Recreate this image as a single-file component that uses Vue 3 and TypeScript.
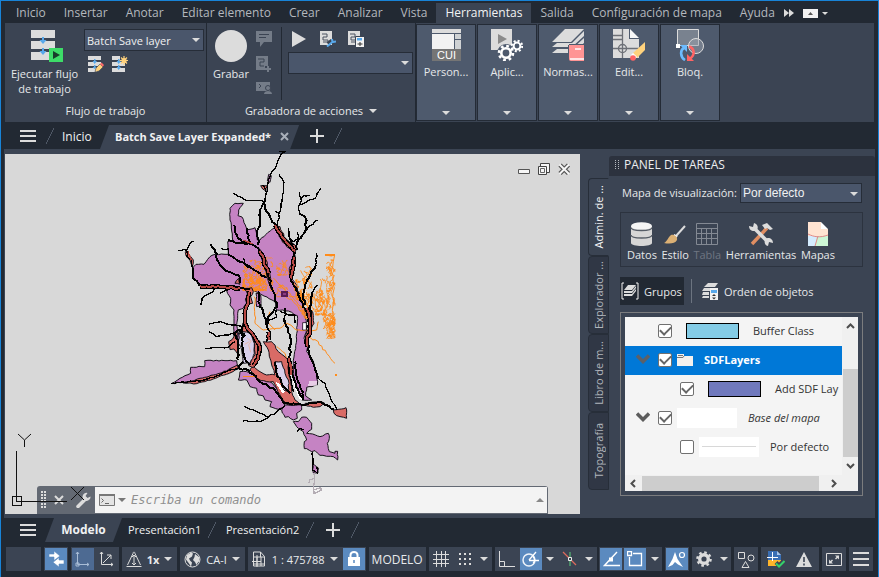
<script setup lang="ts">
import { ref } from 'vue'

type Pt = [number, number]

const menuTabs = ['Inicio', 'Insertar', 'Anotar', 'Editar elemento', 'Crear', 'Analizar', 'Vista', 'Herramientas', 'Salida', 'Configuración de mapa', 'Ayuda']
const activeMenu = ref('Herramientas')
const sideTabs = ['Admin. de ...', 'Explorador ...', 'Libro de m...', 'Topografía']
const activeSide = ref('Admin. de ...')
const workflow = ref('Batch Save layer')
const action = ref('')
const displayMap = ref('Por defecto')
const command = ref('')
const layers = ref({ buffer: true, sdf: true, add: true, base: true, def: false })

/* Deterministic noise so that the map is drawn the same way every time */
function makeNoise(seed: number) {
  let s = seed
  return () => {
    s = (s * 1103515245 + 12345) % 2147483648
    return s / 2147483648
  }
}

function parse(src: string): Pt[] {
  return src.split(' ').map((p) => p.split(',').map(Number) as Pt)
}

/* Breaks each segment into short steps pushed off the line, like a river bank */
function meander(src: string, amp: number, seed: number, close = false): string {
  const rnd = makeNoise(seed * 7919 + 17)
  const pts = parse(src)
  if (close) pts.push(pts[0])
  const out: string[] = [`M${pts[0][0]},${pts[0][1]}`]
  for (let i = 1; i < pts.length; i++) {
    const [x0, y0] = pts[i - 1]
    const [x1, y1] = pts[i]
    const n = Math.max(1, Math.round(Math.hypot(x1 - x0, y1 - y0) / 9))
    for (let k = 1; k <= n; k++) {
      const t = k / n
      const a = k === n ? 0 : amp
      out.push(`L${Math.round(x0 + (x1 - x0) * t + (rnd() - 0.5) * 2 * a)},${Math.round(y0 + (y1 - y0) * t + (rnd() - 0.5) * 2 * a)}`)
    }
  }
  return out.join(' ') + (close ? 'Z' : '')
}

/* Random-walk contour fragments inside a box */
function contours(x: number, y: number, w: number, h: number, count: number, seed: number, lean = 0): string {
  const rnd = makeNoise(seed * 4001 + 3)
  let d = ''
  for (let i = 0; i < count; i++) {
    let px = x + rnd() * w
    let py = y + rnd() * h
    d += `M${Math.round(px)},${Math.round(py)}`
    const steps = 4 + Math.floor(rnd() * 7)
    for (let k = 0; k < steps; k++) {
      px = Math.min(x + w, Math.max(x, px + (rnd() - 0.5) * 13 + lean))
      py = Math.min(y + h, Math.max(y, py + (rnd() - 0.35) * 14))
      d += `L${Math.round(px)},${Math.round(py)}`
    }
  }
  return d
}

const purple = [
  '210,190 225,175 250,175 236,195 234,212 246,216 256,240 262,254 285,248 292,285 300,285 318,268 345,248 360,265 375,290 405,320 405,345 395,400 410,420 420,460 435,500 440,555 432,580 445,600 440,620 460,650 470,690 472,720 440,727 437,753 455,765 425,765 405,715 400,675 400,655 410,585 412,512 385,498 350,495 345,470 270,430 118,420 98,395 98,370 108,358 132,358 150,335 165,328 205,328 203,290 218,285 214,240 210,225',
  '195,430 275,432 262,465 250,490 235,495 230,540 240,585 222,575 222,495 210,480 212,460',
  '288,445 302,450 304,485 290,485',
  '36,715 60,700 92,685 92,667 134,665 134,647 230,647 235,670 200,680 150,695 100,710 60,713',
  '240,680 260,680 300,695 330,710 350,730 370,765 375,785 355,793 330,785 335,770 315,765 310,753 295,750 290,730 270,725 260,705 235,705',
  '365,795 375,780 425,780 425,795 410,805 412,820 400,825 385,815 375,817',
  '410,845 400,830 415,830 425,817 440,817 455,835 455,853 440,865 458,867 480,875 505,865 508,880 502,895 508,920 525,925 525,919 533,919 533,945 520,935 480,931 465,917 455,920 440,911 433,911 433,890 440,885 430,860',
  '458,955 476,970 474,984 460,984',
  '326,88 334,92 330,112 322,108',
]

const red = [
  '310,590 335,590 345,600 355,620 385,645 385,675 395,735 405,765 425,780 380,778 365,760 350,730 340,710 320,710 290,700 270,675 280,665 300,680 320,690 345,690 335,660 330,640 325,615',
  '248,535 262,545 285,575 302,595 298,640 280,668 266,662 285,630 284,595 262,565 246,560',
  '206,590 222,575 232,560 236,600 232,625 222,612 210,614',
  '70,714 120,700 160,690 200,678 232,660 235,672 200,688 160,702 110,716',
  '435,775 480,770 492,773 480,785 460,787 440,783',
  '520,795 545,792 558,788 560,820 540,815 522,805',
  '252,432 275,428 280,440 272,455 278,475 262,480 256,462 262,445',
  '388,370 402,345 402,385 392,402',
  '345,240 360,245 372,275 405,300 412,310 405,322 380,305 358,275',
  '225,415 236,400 240,418',
  '78,318 88,330 100,345 97,365 90,345 78,332',
  '440,495 458,500 462,535 450,560 440,590 436,580 448,545',
  '296,310 318,345 330,390 332,430 322,400 308,350',
  '302,122 322,122 318,138 308,132',
]

const lavender = [
  '240,560 270,565 283,595 283,625 270,655 250,655 245,615 235,595',
  '345,650 365,650 375,685 385,705 385,740 370,735 365,710 350,685',
]

/* Rivers broad enough to show water between both banks */
const wideRivers = [
  '268,440 265,470 256,495 255,525 262,550 285,578 299,608 295,640 280,662',
  '402,335 399,370 392,400',
  '440,490 451,520 450,560 440,585 443,605',
  '345,240 365,275 385,298 405,318',
  '388,640 394,690',
  '325,560 328,585',
  '120,424 240,430',
  '300,318 326,385',
]

const thickRivers = [
  '315,165 315,190 330,215 350,245 365,275 385,300 405,320',
  '405,320 400,370 392,400 408,430 420,460 440,500 450,535 450,560 440,585 445,615 460,655 475,700',
  '222,240 230,270 245,290 275,298 295,310 310,340 325,380 330,420 345,450 352,485 325,515 320,540',
  '205,285 235,295 275,298',
  '205,330 230,345 260,360 300,385 320,400',
  '152,298 165,320 175,350 195,375 235,390 240,415',
  '98,370 98,395 118,420 180,422 240,428 270,432',
  '250,650 235,670',
  '298,440 295,470 310,500 320,540 330,560 325,580 318,590',
  '300,195 300,230 290,270 295,300',
  '467,360 450,390 435,420 430,450 436,480',
  '233,645 235,595 222,565 240,555 255,575',
  '370,520 380,545 390,575 390,655 400,695 415,735 430,765',
  '235,670 265,675 300,710 345,735 375,775 425,780 480,770 522,793',
  '250,540 245,600 255,640 270,660',
  '345,650 350,685 370,725 390,745',
  '418,205 437,220 438,255 415,285 410,315',
  '262,250 265,280 275,300',
  '458,440 452,480 450,530',
  '405,650 412,700 432,755',
]

const thinRivers = [
  '375,20 362,28 350,60 333,85 325,110 318,145 314,170 300,195',
  '358,20 377,19',
  '218,145 240,155 255,165 315,170',
  '357,88 372,112 368,150 360,200 352,240',
  '345,200 358,205',
  '418,140 425,165 415,185 420,205',
  '482,130 465,160 440,170 420,180',
  '448,150 430,152 422,165',
  '472,225 455,240 440,255',
  '182,310 205,312 205,330',
  '55,316 80,315 90,295 100,288',
  '80,315 80,335 95,345 98,370',
  '168,430 150,445 130,455 122,480',
  '180,445 205,435',
  '470,325 467,360',
  '472,420 458,440',
  '148,537 180,530 215,540 245,545',
  '385,250 388,280 400,300',
  '412,262 414,280 400,290 390,280',
  '360,500 385,510 405,510 405,535',
  '375,490 372,530',
  '250,340 255,360 275,370',
  '348,495 350,515 325,525 318,540',
  '148,560 170,575 205,570 230,563',
  '134,611 165,607 205,607 225,590',
  '475,700 495,715 510,755 525,780 530,795',
  '32,715 60,712 100,710 160,698 200,680 235,670',
  '253,785 290,800 325,817',
  '250,828 300,830 325,817 365,790 375,780',
  '308,120 315,130 320,150',
  '385,650 388,690 400,740',
  '410,860 420,850 430,855',
  '458,920 458,975 472,985 470,965',
]

const purplePaths = purple.map((s, i) => meander(s, 1.5, i + 3, true))
const redPaths = red.map((s, i) => meander(s, 2, i + 40, true))
const lavenderPaths = lavender.map((s, i) => meander(s, 2, i + 60, true))
const widePaths = wideRivers.map((s, i) => meander(s, 2.5, i + 300))
const thickPaths = thickRivers.map((s, i) => meander(s, 3, i + 80))
const thinPaths = thinRivers.map((s, i) => meander(s, 2.2, i + 120))
const contourPaths = [
  contours(248, 335, 70, 100, 38, 1, 1),
  contours(250, 375, 90, 62, 40, 2, 1),
  contours(320, 335, 65, 55, 12, 3),
  contours(345, 410, 60, 45, 6, 14, 2),
  contours(408, 365, 48, 100, 30, 4),
  contours(466, 400, 30, 110, 22, 5),
  contours(500, 345, 25, 235, 44, 6),
  contours(440, 440, 50, 60, 16, 7),
  contours(490, 505, 35, 70, 18, 8),
  contours(412, 440, 36, 80, 14, 9, 2),
]
const contourLines = [
  '495,330 524,330 515,375 520,420 518,540',
  '340,400 360,420 380,440 410,470 430,500 445,520',
  '350,430 375,450 400,470 425,500',
  '283,455 285,535 310,555 360,550 380,535 410,555 470,555 475,530',
  '330,500 322,530 345,555',
  '350,605 375,625 385,645',
  '445,575 475,590 500,625 525,655',
  '410,440 430,470 450,490',
].map((s, i) => meander(s, 3, i + 200))
</script>

<template>
  <div class="app">
    <nav class="menu" aria-label="Cinta">
      <button v-for="t in menuTabs" :key="t" type="button" class="menu-tab" :class="{ on: t === activeMenu }" @click="activeMenu = t">{{ t }}</button>
      <button type="button" class="more" aria-label="Más fichas"><svg width="10" height="8" viewBox="0 0 10 8"><path d="M0 0l5 4-5 4zM5 0l5 4-5 4z" fill="#dcdcdc" /></svg></button>
      <button type="button" class="mini" aria-label="Minimizar cinta"><svg width="15" height="9" viewBox="0 0 15 9"><path d="M0 0h15v9H0z" fill="#f2f2f2" /><path d="M5 6l2.500-3 2.500 3z" fill="#555" /></svg></button>
      <button type="button" class="mini-arrow" aria-label="Opciones de cinta"><span class="tri small" /></button>
    </nav>

    <header class="ribbon">
      <section class="group flow">
        <div class="group-body">
          <button type="button" class="big run">
            <svg width="34" height="34" viewBox="0 0 34 34">
              <path d="M1 1h24v8H1zM1 12h24v8H1zM1 23h24v8H1z" fill="#dcdcdc" />
              <path d="M12 8h2v3h2.500L13 15l-3.500-4H12zM12 19h2v3h2.500L13 26l-3.500-4H12z" fill="#58a8ea" />
              <path d="M19 19h14v14H19z" fill="#3ddc68" /><path d="M23 22l7 4-7 4z" fill="#173d2a" />
            </svg>
            <span>Ejecutar flujo<br />de trabajo</span>
          </button>
          <div class="stack">
            <label class="select wf">
              <select v-model="workflow" aria-label="Flujo de trabajo"><option>Batch Save layer</option></select>
              <span class="tri" />
            </label>
            <div class="icons">
              <button type="button" class="ico" aria-label="Editar flujo de trabajo">
                <svg width="16" height="16" viewBox="0 0 16 16"><path d="M0 0h13v4H0zM0 6h13v4H0zM0 12h9v4H0z" fill="#dcdcdc" /><path d="M6 3h1.500v2h1.500L6.700 8 4.500 5H6zM6 9h1.500v2h1l-2 2-2-2H6z" fill="#58a8ea" /><path d="M7 16l1-4 4-4 3 3-4 4z" fill="#ffd27d" stroke="#3b4453" stroke-width=".6" /><path d="M12 8l1.500-1.500L16 9l-1.300 1.800z" fill="#ff6b6b" /></svg>
              </button>
              <button type="button" class="ico" aria-label="Nuevo flujo de trabajo">
                <svg width="16" height="16" viewBox="0 0 16 16"><path d="M0 0h8v4H0zM0 6h13v4H0zM0 12h13v4H0z" fill="#dcdcdc" /><path d="M6 3h1.500v2h1.500L6.700 8 4.500 5H6zM6 9h1.500v2h1.500l-2.300 3-2.200-3H6z" fill="#58a8ea" /><path d="M12 0v9M7.500 4.500h9M9 1.500l6 6M15 1.500l-6 6" stroke="#ffd27d" stroke-width="1.200" /><circle cx="12" cy="4.500" r="2.600" fill="#ffd27d" /></svg>
              </button>
            </div>
          </div>
        </div>
        <p class="caption">Flujo de trabajo</p>
      </section>

      <section class="group rec">
        <div class="group-body">
          <button type="button" class="big record">
            <svg width="34" height="34" viewBox="0 0 34 34"><circle cx="17" cy="17" r="16" fill="#dcdcdc" /></svg>
            <span>Grabar</span>
          </button>
          <div class="col">
            <svg width="16" height="16" viewBox="0 0 16 16"><path d="M0 0h16v11H8l-4 5v-5H0z" fill="#747c88" /><path d="M3 3.500h10M3 6.500h7" stroke="#3b4453" /></svg>
            <svg width="16" height="16" viewBox="0 0 16 16"><path d="M0 0h12v10h-3v4H0z" fill="#747c88" /><path d="M2 3h6v3H4v4h4" stroke="#3b4453" fill="none" /><path d="M12 10v6M9 13h6" stroke="#747c88" stroke-width="2" /></svg>
            <svg width="16" height="13" viewBox="0 0 16 13"><path d="M0 1h14v9H0z" fill="#747c88" /><path d="M3 3l2 2-2 2" stroke="#3b4453" fill="none" /><circle cx="12" cy="7" r="2.500" fill="#747c88" stroke="#3b4453" /><path d="M8 13c0-4 8-4 8 0z" fill="#747c88" /></svg>
          </div>
          <i class="rule" />
          <div class="stack actions">
            <div class="icons wide">
              <button type="button" class="ico" aria-label="Reproducir"><svg width="16" height="16" viewBox="0 0 16 16"><path d="M0 0l14 8-14 8z" fill="#dcdcdc" /></svg></button>
              <button type="button" class="ico" aria-label="Preferencias"><svg width="16" height="16" viewBox="0 0 16 16"><path d="M0 0h12v14H0z" fill="#dcdcdc" /><path d="M2 3h5v3H3v3h5v2H3" stroke="#4a5260" fill="none" /><path d="M8 13l4-3.500" stroke="#3b4453" stroke-width="4" /><path d="M7 15.500l6-5M12 8l.5 3 3.500-.5" stroke="#58a8ea" stroke-width="2" fill="none" /></svg></button>
              <button type="button" class="ico" aria-label="Administrar macros"><svg width="16" height="16" viewBox="0 0 16 16"><path d="M0 0h12v14H0z" fill="#dcdcdc" /><path d="M2 3h5v3H3v3h5v2H3" stroke="#4a5260" fill="none" /><path d="M7.500 5.500h9v11h-9z" fill="#f2f2f2" stroke="#3b4453" /><path d="M9 7h5v2.500H9z" fill="#58a8ea" /><path d="M9.500 13h5M12 11v4" stroke="#333" /></svg></button>
            </div>
            <label class="select ac">
              <select v-model="action" aria-label="Macros disponibles"><option value=""></option></select>
              <span class="tri" />
            </label>
          </div>
        </div>
        <p class="caption">Grabadora de acciones <span class="tri" /></p>
      </section>

      <button type="button" class="fold">
        <svg width="32" height="32" viewBox="0 0 32 32"><path d="M2 0h29v4H2z" fill="#dcdcdc" /><path d="M2 5h22v15H2z" fill="#f2f2f2" /><path d="M25 5h6v5h-6zM25 11h6v9h-6z" fill="#cfd2d4" /><path d="M2 20h29v12H2z" fill="#757575" /><text x="16.500" y="30" text-anchor="middle" font-size="11" fill="#fff" font-family="Liberation Sans, sans-serif">CUI</text></svg>
        <span>Person...</span><i class="tri" />
      </button>
      <button type="button" class="fold">
        <svg width="32" height="32" viewBox="0 0 32 32"><path d="M0 0h21v21H0z" fill="#dcdcdc" /><path d="M7 5l9 5-9 5z" fill="#8a8a8a" /><circle cx="15" cy="24" r="5.500" fill="none" stroke="#4e5a6d" stroke-width="7" /><circle cx="15" cy="24" r="4.700" fill="#4e5a6d" stroke="#fff" stroke-width="2.600" /><circle cx="15" cy="24" r="7" fill="none" stroke="#fff" stroke-width="2.600" stroke-dasharray="2.750 2.750" /><circle cx="26" cy="17" r="3.400" fill="#4e5a6d" stroke="#fff" stroke-width="2" /><circle cx="26" cy="17" r="5.200" fill="none" stroke="#fff" stroke-width="2" stroke-dasharray="2.040 2.040" /></svg>
        <span>Aplic...</span><i class="tri" />
      </button>
      <button type="button" class="fold">
        <svg width="32" height="32" viewBox="0 0 32 32"><path d="M13 0h19L19 13H0zM5 14h15L32 2v5L20 18H0zM5 20h15L32 9v5L20 24H0z" fill="#dcdcdc" /><path d="M17 16h15v16H19q-2 0-2-2z" fill="#ff9494" /><path d="M16.500 16v16M17 15.500h15" stroke="#4e5a6d" /><path d="M23 20h6" stroke="#fff" stroke-width="1.500" /><path d="M18 30h14" stroke="#fff" stroke-width="1.500" /></svg>
        <span>Normas...</span><i class="tri" />
      </button>
      <button type="button" class="fold">
        <svg width="32" height="32" viewBox="0 0 32 32"><path d="M0 0h16v10h10v19H0z" fill="#dcdcdc" /><path d="M17 0l9 9h-9z" fill="#f7f7f7" /><path d="M9.500 0v29M0 6.500h9M0 10.500h9M0 19.500h26" stroke="#6d7077" fill="none" stroke-width="1.300" /><circle cx="9.500" cy="19.500" r="4" fill="none" stroke="#6d7077" stroke-width="1.300" /><path d="M20 24L32 13v8l-8 8z" fill="#ffd27d" /><path d="M19 25l4 4" stroke="#fff" stroke-width="3" /><circle cx="20" cy="29" r="2.800" fill="#ff6464" /></svg>
        <span>Edit...</span><i class="tri" />
      </button>
      <button type="button" class="fold">
        <svg width="32" height="32" viewBox="0 0 32 32"><path d="M3.500.500h21v16h-21z" fill="#79828f" stroke="#dcdcdc" /><circle cx="22" cy="17" r="7.500" fill="#99a0ab" fill-opacity=".5" stroke="#dcdcdc" /><path d="M2 15h4v4H2z" fill="#fff" /><path d="M11 31C6 28 6 21 10 19" stroke="#6cbcff" stroke-width="2.600" fill="none" /><path d="M6 16h7v7z" fill="#6cbcff" /><path d="M15 17.500c6 2 6 9 1 12" stroke="#ff6464" stroke-width="2.600" fill="none" /><path d="M20 32h-7v-7z" fill="#ff6464" /></svg>
        <span>Bloq.</span><i class="tri" />
      </button>
    </header>

    <div class="file-tabs">
      <button type="button" class="burger" aria-label="Menú de dibujos"><i /><i /><i /></button>
      <i class="slash" />
      <button type="button" class="plain start">Inicio</button>
      <div class="doc">
        <span>Batch Save Layer Expanded*</span>
        <button type="button" class="ico" aria-label="Cerrar dibujo"><svg width="9" height="9" viewBox="0 0 9 9"><path d="M1 1l7 7M8 1L1 8" stroke="#a9b0ba" stroke-width="2" /></svg></button>
      </div>
      <button type="button" class="ico plus" aria-label="Nuevo dibujo"><svg width="14" height="14" viewBox="0 0 14 14"><path d="M7 0v14M0 7h14" stroke="#dcdcdc" stroke-width="2" /></svg></button>
      <i class="slash" />
    </div>

    <main class="work">
      <div class="canvas">
        <svg class="map" width="575" height="360" viewBox="5 154 575 360" shape-rendering="crispEdges">
          <g transform="translate(160 145) scale(.3333)" fill="none" stroke-linejoin="round">
            <path v-for="(d, i) in purplePaths" :key="'p' + i" :d="d" fill="#c583c3" stroke="#16121a" stroke-width="3" />
            <path v-for="(d, i) in contourPaths" :key="'c' + i" :d="d" stroke="#ff8c1a" stroke-width="2.500" />
            <path v-for="(d, i) in contourLines" :key="'l' + i" :d="d" stroke="#ff8c1a" stroke-width="3" />
            <path d="M495 330h29M250 695h98" stroke="#ff8c1a" stroke-width="5" />
            <path d="M525 687h7v6h-7z" fill="#ff8c1a" />
            <path v-for="(d, i) in redPaths" :key="'r' + i" :d="d" fill="#d96b66" stroke="#16121a" stroke-width="3" />
            <path v-for="(d, i) in lavenderPaths" :key="'v' + i" :d="d" fill="#d8cfea" stroke="#16121a" stroke-width="3" />
            <path d="M262 580l12 8-8 12 6 22M268 590l-14 8" stroke="#e9b9ad" stroke-width="3" />
            <path d="M345 710l12 5 18 25-8 5zM398 695l22 50 12 20-14-2-16-40z" fill="#fff" />
            <path d="M362 437h22v20h-22z" fill="#571b52" /><path d="M369 443h8v8h-8z" fill="#8c3b80" />
            <path d="M428 533h11v22h-11z" fill="#fff" stroke="#000" stroke-width="2" />
            <path d="M444 722h28v-14h-24zM432 430l8 10-4 14z" fill="#fff" fill-opacity=".6" />
            <path v-for="(d, i) in thinPaths" :key="'n' + i" :d="d" stroke="#000" stroke-width="4" />
            <path v-for="(d, i) in thickPaths" :key="'t' + i" :d="d" stroke="#000" stroke-width="6" />
            <path v-for="(d, i) in widePaths" :key="'wb' + i" :d="d" stroke="#000" stroke-width="13" />
            <path v-for="(d, i) in widePaths" :key="'wr' + i" :d="d" stroke="#b84a45" stroke-width="6" />
            <path d="M84 320l10 25M250 285l28 12M392 655l4 20" stroke="#b8453f" stroke-width="4" />
            <path d="M462 985l2 20-3 20 1 22 22-12-2-8-18 8M446 1015l4-10 12-5" stroke="#b4adb4" stroke-width="4" />
          </g>
          <g fill="none" stroke="#111">
            <path d="M16.500 451v50M16 501.500h51M12.500 496.500h9v9h-9z" />
            <path d="M71 487l13 13M84 487l-13 13" shape-rendering="auto" />
            <path d="M18 434l6.500 6 6.500-6M24.500 440v7" shape-rendering="auto" />
          </g>
        </svg>
        <div class="win">
          <button type="button" class="ico" aria-label="Minimizar"><svg width="13" height="13" viewBox="0 0 13 13"><path d="M.5 6.500h11v4H.5z" fill="#f6f6f6" stroke="#555" /></svg></button>
          <button type="button" class="ico" aria-label="Restaurar"><svg width="13" height="13" viewBox="0 0 13 13"><path d="M2.500.500h9v9h-9z" fill="#f6f6f6" stroke="#444" /><path d="M.5 3.500h8v8h-8z" fill="#f6f6f6" stroke="#444" /><path d="M2.500 5.500h4v4h-4z" fill="none" stroke="#666" /></svg></button>
          <button type="button" class="ico" aria-label="Cerrar"><svg width="13" height="13" viewBox="0 0 13 13"><path d="M2 2l8.500 8.500M10.500 2L2 10.500" stroke="#555" stroke-width="4.500" /><path d="M1.500 1.500l9.500 9.500M11 1.500L1.500 11" stroke="#f6f6f6" stroke-width="2" /></svg></button>
        </div>
        <div class="cmd">
          <div class="cmd-tools">
            <svg width="5" height="18" viewBox="0 0 5 18"><path d="M1 0v18M4 0v18" stroke="#dcdcdc" stroke-width="2" stroke-dasharray="2 1" /></svg>
            <button type="button" class="ico" aria-label="Cerrar línea de comando"><svg width="10" height="10" viewBox="0 0 10 10"><path d="M1 1l8 8M9 1L1 9" stroke="#dcdcdc" stroke-width="2" /></svg></button>
            <button type="button" class="ico" aria-label="Personalizar"><svg width="16" height="16" viewBox="0 0 16 16"><path d="M2 14.500l7-7" stroke="#dcdcdc" stroke-width="3.500" stroke-linecap="round" /><path d="M14.500 4.500a4 4 0 1 1-3-3.500l-2 3 2 2z" fill="#dcdcdc" /></svg></button>
          </div>
          <div class="cmd-field">
            <svg width="16" height="12" viewBox="0 0 16 12"><path d="M.5.500h15v11H.5z" fill="#e4e4e4" stroke="#777" /><path d="M0 1h16" stroke="#777" stroke-width="2" /><path d="M2.500 4.500l2 2-2 2M6 9.500h4" stroke="#666" fill="none" /></svg>
            <span class="tri grey" />
            <input v-model="command" type="text" placeholder="Escriba un comando" aria-label="Línea de comando" />
            <span class="tri up" />
          </div>
        </div>
      </div>

      <div class="side-tabs">
        <button v-for="t in sideTabs" :key="t" type="button" class="side-tab" :class="{ on: t === activeSide }" @click="activeSide = t"><span>{{ t }}</span></button>
      </div>

      <aside class="panel">
        <h2><svg width="4" height="9" viewBox="0 0 4 9"><path d="M.5 0v9M3.500 0v9" stroke="#b5b9c0" stroke-dasharray="1 1" /></svg>PANEL DE TAREAS</h2>
        <div class="panel-body">
          <div class="row-map">
            <label for="display-map">Mapa de visualización:</label>
            <span class="select dm"><select id="display-map" v-model="displayMap"><option>Por defecto</option></select><span class="tri" /></span>
          </div>
          <div class="tools">
            <button type="button">
              <svg width="24" height="26" viewBox="0 0 24 26"><path d="M1 5v17c0 4 21 4 21 0V5z" fill="#d6d6d6" /><ellipse cx="11.500" cy="5" rx="10.500" ry="3.800" fill="#f5f5f5" /><path d="M1 6.500c0 4 21 4 21 0M1 14c0 4 21 4 21 0" fill="none" stroke="#555c66" stroke-width="1.300" /></svg>
              Datos
            </button>
            <button type="button">
              <svg width="24" height="26" viewBox="0 0 24 26"><path d="M22 5L13 15" stroke="#dcdcdc" stroke-width="2" /><path d="M13 14l-2 3" stroke="#f2f2f2" stroke-width="4" /><path d="M8 14c3-1 7 2 6 5-2 4-8 4-13 3 3-1 4-6 7-8z" fill="#dbb074" /></svg>
              Estilo
            </button>
            <button type="button" disabled>
              <svg width="24" height="26" viewBox="0 0 24 26"><path d="M1.500 2.500h21v21h-21zM1 7.500h22M1 12.500h22M1 17.500h22M6.500 7v16M11.500 7v16M16.500 7v16" fill="none" stroke="#838993" /></svg>
              Tabla
            </button>
            <button type="button">
              <svg width="26" height="26" viewBox="0 0 26 26"><path d="M4 23L19 7" stroke="#e08e62" stroke-width="3.500" /><path d="M14 4l5-2 6 6-3 1-3-2-2 1z" fill="#dcdcdc" /><path d="M6 7l14 14" stroke="#dcdcdc" stroke-width="3.500" /><path d="M1 5l4 1 1-4c5 1 5 8 0 8-3 0-5-2-5-5zM25 22l-4-1-1 4c-5-1-4-8 0-8 3 0 5 2 5 5z" fill="#dcdcdc" /></svg>
              Herramientas
            </button>
            <button type="button">
              <svg width="24" height="26" viewBox="0 0 24 26"><path d="M2 1h13v7h7v17H2z" fill="#ffe4d2" /><path d="M15 1l7 7h-7z" fill="#fff" /><path d="M2 15h9v10H2z" fill="#d4ecff" /><path d="M11 15h11v10H9z" fill="#cdf7d6" /><path d="M2 13c6 3 12 4 20 1M12 15l-3 10" fill="none" stroke="#e08a8a" /></svg>
              Mapas
            </button>
          </div>
          <div class="views">
            <button type="button" class="on">
              <svg width="18" height="18" viewBox="0 0 18 18"><path d="M3 1H1v16h2M15 1h2v16h-2" fill="none" stroke="#f2f2f2" /><path d="M7 3h8l-4 5H3zM3 9h8l4-5v2l-4 5H3zM3 12h8l4-5v2l-4 5H3z" fill="#dcdcdc" /></svg>
              Grupos
            </button>
            <i />
            <button type="button">
              <svg width="18" height="18" viewBox="0 0 18 18"><path d="M7 1h10l-3 4H3zM3 6h6v3H1zM2 10h6v3H1zM2 14h6v2H1z" fill="#dcdcdc" /><path d="M9 6h8v12H9z" fill="#f2f2f2" /><path d="M10 8h6v3h-6z" fill="#58a8ea" /><path d="M13 12l2 2h-4zM13 17.500l2-2h-4z" fill="#333" /></svg>
              Orden de objetos
            </button>
          </div>
          <div class="tree-frame">
            <div class="tree">
              <div class="tree-rows">
                <label class="node"><input v-model="layers.buffer" type="checkbox" /><i class="swatch cyan" />Buffer Class</label>
                <label class="node sel"><svg class="chev" width="14" height="11" viewBox="0 0 14 11"><path d="M1 1.500l6 6 6-6" fill="none" stroke="#5c6068" stroke-width="3.500" /></svg><input v-model="layers.sdf" type="checkbox" /><svg class="folder" width="16" height="14" viewBox="0 0 16 14"><path d="M0 1h7v2h9v10H0z" fill="#f4f1ee" /><path d="M0 4.500h6l1-1.500M1 2.500h5" stroke="#777" fill="none" /></svg>SDFLayers</label>
                <label class="node deep"><input v-model="layers.add" type="checkbox" /><i class="swatch violet" />Add SDF Lay</label>
                <label class="node it"><svg class="chev" width="14" height="11" viewBox="0 0 14 11"><path d="M1 1.500l6 6 6-6" fill="none" stroke="#5c5c5c" stroke-width="3.500" /></svg><input v-model="layers.base" type="checkbox" /><i class="thumb" />Base del mapa</label>
                <label class="node deep"><input v-model="layers.def" type="checkbox" /><i class="thumb line" />Por defecto</label>
              </div>
              <div class="vbar">
                <svg width="9" height="6" viewBox="0 0 9 6"><path d="M1 5l3.500-3.500L8 5" fill="none" stroke="#4d4d4d" stroke-width="2" /></svg>
                <i />
                <svg width="9" height="6" viewBox="0 0 9 6"><path d="M1 1l3.500 3.500L8 1" fill="none" stroke="#4d4d4d" stroke-width="2" /></svg>
              </div>
              <div class="hbar">
                <svg width="6" height="9" viewBox="0 0 6 9"><path d="M5 1L1.500 4.500 5 8" fill="none" stroke="#4d4d4d" stroke-width="2" /></svg>
                <i />
                <svg width="6" height="9" viewBox="0 0 6 9"><path d="M1 1l3.500 3.500L1 8" fill="none" stroke="#4d4d4d" stroke-width="2" /></svg>
              </div>
            </div>
          </div>
        </div>
      </aside>
    </main>

    <div class="layout-tabs">
      <button type="button" class="burger" aria-label="Menú de presentaciones"><i /><i /><i /></button>
      <button type="button" class="model">Modelo</button>
      <button type="button" class="plain">Presentación1</button>
      <i class="slash" />
      <button type="button" class="plain">Presentación2</button>
      <i class="slash" />
      <button type="button" class="ico plus" aria-label="Nueva presentación"><svg width="14" height="14" viewBox="0 0 14 14"><path d="M7 0v14M0 7h14" stroke="#dcdcdc" stroke-width="2" /></svg></button>
      <i class="slash" />
    </div>

    <footer class="status">
      <div class="chip blank" />
      <div class="chip"><button type="button" class="cell hot" aria-label="Coordenadas"><svg width="18" height="16" viewBox="0 0 18 16"><path d="M2 3h5V0l6 5-6 4.500V6H2zM17 9h-5V6.500l-6 4.800 6 4.700v-3h5z" fill="#fff" stroke="#5b8abf" stroke-width=".6" /></svg></button></div>
      <div class="chip">
        <button type="button" class="cell mid" aria-label="SCP 2D"><svg width="16" height="16" viewBox="0 0 16 16"><path d="M2.500 1v12.500H14M1 3l1.500-2L4 3M12 12l2 1.500-2 1.500M1 12h3v3H1z" fill="none" stroke="#a9bdd6" /></svg></button>
        <button type="button" class="cell" aria-label="SCP 3D"><svg width="16" height="16" viewBox="0 0 16 16"><path d="M2.500 1v12.500H14M1 3l1.500-2L4 3M12 12l2 1.500-2 1.500M4 12l8-8M8 4h4v4" fill="none" stroke="#dcdcdc" /></svg></button>
      </div>
      <button type="button" class="chip pad"><svg width="16" height="17" viewBox="0 0 16 17"><path d="M.5 15.500h15M1.500 14L7 2.500C7.300.500 8.700.500 9 2.500L14.500 14M8 4v10M6 6l2-2 2 2M6 12l2 2 2-2" fill="none" stroke="#dcdcdc" /></svg><b>1x</b><span class="tri" /></button>
      <button type="button" class="chip pad"><svg width="17" height="17" viewBox="0 0 17 17"><circle cx="8.500" cy="8.500" r="7.500" fill="#3b4453" stroke="#dcdcdc" /><path d="M3 4l4-2.500 2 1-1 3-3 2 1 2 2 2-1 4-2-3-3-4zM11 3l4 3 .500 4-2 2-1 2-1.500-3-2-2 1.500-3z" fill="#dcdcdc" /></svg>CA-I<span class="tri" /></button>
      <div class="chip">
        <button type="button" class="cell scale"><svg width="15" height="17" viewBox="0 0 15 17"><path d="M1.500 6V1h7l4 4.500V15h-11V6h11M8.500 1v5M5 6v9M0 10.500h9M5 4v12M9 6v9M1.500 13h11" fill="none" stroke="#dcdcdc" /></svg>1 : 475788<span class="tri" /></button>
        <button type="button" class="cell hot" aria-label="Bloquear escala"><svg width="12" height="16" viewBox="0 0 12 16"><path d="M2.500 7V4a3.500 3 0 0 1 7 0v3" fill="none" stroke="#fff" stroke-width="2" /><path d="M0 6h12v9H0z" fill="#fff" /><path d="M6 9v3" stroke="#5b8abf" stroke-width="1.500" /></svg></button>
      </div>
      <button type="button" class="chip word">MODELO</button>
      <div class="chip">
        <button type="button" class="cell" aria-label="Rejilla"><svg width="16" height="16" viewBox="0 0 16 16"><path d="M3.500 0v16M8.500 0v16M12.500 0v16M0 3.500h16M0 8.500h16M0 12.500h16" stroke="#dcdcdc" /></svg></button>
        <button type="button" class="cell" aria-label="Forzar cursor"><svg width="14" height="14" viewBox="0 0 14 14"><path d="M1 2h12M1 7h12M1 12h12" stroke="#dcdcdc" stroke-width="2" stroke-dasharray="2 3" /></svg></button>
        <button type="button" class="cell arrow" aria-label="Opciones de rejilla"><span class="tri" /></button>
      </div>
      <div class="chip">
        <button type="button" class="cell" aria-label="Orto"><svg width="17" height="16" viewBox="0 0 17 16"><path d="M1.500 0v15.500H17M1.500 10.500h5v5" fill="none" stroke="#dcdcdc" /></svg></button>
        <button type="button" class="cell hot" aria-label="Rastreo polar"><svg width="17" height="16" viewBox="0 0 17 16"><circle cx="7" cy="9" r="6" fill="none" stroke="#eef4fb" stroke-width="1.500" /><path d="M7 9.500h10M7 9l7-8M11 6c2 1 2 5 0 6" fill="none" stroke="#fff" stroke-width="1.300" /></svg></button>
        <button type="button" class="cell arrow" aria-label="Opciones de rastreo"><span class="tri" /></button>
        <button type="button" class="cell" aria-label="Dibujo isométrico"><svg width="16" height="16" viewBox="0 0 16 16"><path d="M8 1v14" stroke="#5bd07d" /><path d="M1 1l13 13" stroke="#dc6a5c" stroke-width="1.300" /><path d="M6.500 6.500h3v3h-3z" fill="#3b4453" stroke="#eee" /></svg></button>
        <button type="button" class="cell arrow" aria-label="Opciones isométricas"><span class="tri" /></button>
      </div>
      <div class="chip">
        <button type="button" class="cell hot" aria-label="Rastreo de objetos"><svg width="17" height="16" viewBox="0 0 17 16"><path d="M14 1L1.500 14.500H17" fill="none" stroke="#fff" stroke-width="1.400" /><path d="M6 6.500h4v4H6z" fill="#fff" /></svg></button>
        <button type="button" class="cell hot" aria-label="Referencia a objetos"><svg width="16" height="16" viewBox="0 0 16 16"><path d="M6 2.500h8.500v12h-12V6M.5.500h4v4h-4z" fill="none" stroke="#fff" stroke-width="1.300" /></svg></button>
        <button type="button" class="cell arrow" aria-label="Opciones de referencia"><span class="tri" /></button>
      </div>
      <div class="chip"><button type="button" class="cell hot" aria-label="Visibilidad de anotación"><svg width="18" height="17" viewBox="0 0 18 17"><path d="M7 1l2.500 7 5.500 8-5-2.500L7 11l-2.500 3L0 16l4.500-8z" fill="#fff" /><circle cx="14" cy="4" r="2.500" fill="none" stroke="#fff" stroke-width="1.200" /></svg></button></div>
      <div class="chip">
        <button type="button" class="cell" aria-label="Espacio de trabajo"><svg width="16" height="16" viewBox="0 0 16 16"><circle cx="8" cy="8" r="4.300" fill="none" stroke="#dcdcdc" stroke-width="3.400" /><circle cx="8" cy="8" r="6.600" fill="none" stroke="#dcdcdc" stroke-width="2.400" stroke-dasharray="2.590 2.590" /></svg></button>
        <button type="button" class="cell arrow" aria-label="Opciones de espacio"><span class="tri" /></button>
      </div>
      <div class="chip"><button type="button" class="cell" aria-label="Unidades"><svg width="17" height="17" viewBox="0 0 17 17"><path d="M.5 1.500h6v6h-6zM7.500 10.500l3.500 6H4z" fill="none" stroke="#dcdcdc" /><circle cx="13" cy="7" r="3" fill="none" stroke="#dcdcdc" /></svg></button></div>
      <div class="chip pair">
        <button type="button" class="cell" aria-label="Estado del dibujo"><svg width="18" height="17" viewBox="0 0 18 17"><path d="M1 0h9l4 4v5H1z" fill="#3a6fb5" /><path d="M10 0l4 4h-4z" fill="#a9c6ea" /><path d="M1 9h13v6H1z" fill="#ffb52b" /><path d="M0 6.500h11M5.500 1v9" stroke="#fff" /><path d="M9 11.500l3 3 5-5" fill="none" stroke="#3b4453" stroke-width="4" /><path d="M9 12.500l3 3 5.500-5.500" fill="none" stroke="#35d06a" stroke-width="2" /></svg></button>
        <button type="button" class="cell" aria-label="Avisos"><svg width="16" height="15" viewBox="0 0 16 15"><path d="M8 0l8 15H0z" fill="#dcdcdc" /><path d="M8 5v5M8 11.500v2" stroke="#3b4453" stroke-width="1.600" /></svg></button>
      </div>
      <div class="chip"><button type="button" class="cell" aria-label="Pantalla completa"><svg width="16" height="13" viewBox="0 0 16 13"><path d="M.5.500h15v12H.5z" fill="none" stroke="#dcdcdc" /><path d="M13 2.500v4L11.500 5 10 6.500 9 5.500 10.500 4 9 2.500zM3 10.500v-4L4.500 8 6 6.500l1 1L5.500 9 7 10.500z" fill="#dcdcdc" /></svg></button></div>
      <div class="chip"><button type="button" class="cell burger" aria-label="Personalización"><i /><i /><i /></button></div>
    </footer>
  </div>
</template>

<style>
body {
  background: #222933;
}
</style>

<style scoped>
.app,
.app * {
  box-sizing: border-box;
}
.app {
  display: flex;
  flex-direction: column;
  min-height: 100vh;
  border: 1px solid #1883d7;
  background: #222933;
  color: #e6e8ea;
  font: 12px/15px 'Open Sans', 'Noto Sans', sans-serif;
}
button {
  margin: 0;
  padding: 0;
  border: 0;
  background: none;
  color: inherit;
  font: inherit;
  white-space: nowrap;
}
svg {
  display: block;
  flex: none;
}
.ico {
  display: flex;
}
.tri {
  flex: none;
  display: inline-block;
  border: 4px solid transparent;
  border-top-color: #dcdcdc;
  border-bottom-width: 0;
}
.tri.small {
  border-width: 3px 3px 0;
}
.tri.grey {
  border-top-color: #777;
}
.tri.up {
  border-width: 0 4px 4px;
  border-bottom-color: #888;
}

/* Menu tabs */
.menu {
  display: flex;
  align-items: stretch;
  height: 22px;
  padding: 2px 0 0 6px;
  color: #b4b8be;
}
.menu-tab {
  padding: 0 9px 2px;
}
.menu-tab.on {
  background: #3b4453;
  color: #f2f3f4;
}
.more,
.mini,
.mini-arrow {
  display: flex;
  align-items: center;
  margin-left: 0;
}
.mini {
  margin-left: 9px;
}
.mini-arrow {
  margin-left: 4px;
}

/* Ribbon */
.ribbon {
  display: flex;
  height: 99px;
  margin: 0 4px;
  background: #3b4453;
  font-size: 11px;
}
.group {
  display: flex;
  flex-direction: column;
  justify-content: space-between;
  border-right: 1px solid #222933;
}
.flow {
  width: 202px;
}
.rec {
  width: 209px;
}
.group-body {
  display: flex;
  padding-top: 6px;
}
.caption {
  display: flex;
  justify-content: center;
  align-items: center;
  gap: 6px;
  height: 21px;
  margin: 0;
  padding-bottom: 2px;
}
.big {
  display: flex;
  flex-direction: column;
  align-items: center;
  gap: 3px;
}
.run {
  width: 79px;
}
.run svg {
  margin-left: 4px;
}
.record {
  width: 48px;
}
.stack {
  display: flex;
  flex-direction: column;
}
.icons {
  display: flex;
  gap: 8px;
  padding: 5px 4px;
}
.icons.wide {
  gap: 12px;
  padding: 2px 4px 5px;
}
.select {
  position: relative;
  display: block;
  border: 1px solid #262d38;
  background: #4a566b;
}
.select select {
  display: block;
  width: 100%;
  height: 20px;
  padding: 0 16px 0 2px;
  border: 0;
  background: none;
  color: #f0f1f2;
  font: inherit;
  appearance: none;
}
.select .tri {
  position: absolute;
  top: 8px;
  right: 3px;
}
.wf {
  width: 120px;
}
.ac {
  width: 125px;
}
.col {
  display: flex;
  flex-direction: column;
  gap: 9px;
  padding: 2px 9px 0 1px;
}
.rule {
  width: 1px;
  height: 73px;
  margin: -2px 6px 0 0;
  background: #222933;
}
.fold {
  display: flex;
  flex-direction: column;
  align-items: center;
  width: 60px;
  height: 97px;
  margin: 1px 1px 0 0;
  padding: 4px 0 5px;
  border: 1px solid #242b36;
  background: #4e5a6d;
}
.fold span {
  margin-top: 3px;
}
.fold .tri {
  margin-top: auto;
}

/* Drawing tabs */
.file-tabs,
.layout-tabs {
  display: flex;
  align-items: center;
  height: 27px;
  padding-left: 19px;
  color: #f0f1f2;
  font-size: 12px;
}
.file-tabs {
  padding-top: 1px;
}
.burger {
  display: flex;
  flex-direction: column;
  gap: 3px;
  width: 16px;
}
.burger i {
  height: 2px;
  background: #dcdcdc;
}
.slash {
  flex: none;
  width: 8px;
  height: 16px;
  background: linear-gradient(to bottom right, transparent 46%, #4f5866 46%, #4f5866 54%, transparent 54%);
}
.file-tabs .slash {
  margin: 0 8px 0 10px;
}
.start {
  width: 38px;
  text-align: left;
}
.doc {
  display: flex;
  align-items: center;
  gap: 9px;
  height: 26px;
  padding: 0 10px 0 15px;
  background: #3b4453;
  clip-path: polygon(9px 2px, 100% 2px, calc(100% - 9px) 100%, 0 100%);
  font-size: 11px;
  font-weight: 700;
}
.plus {
  margin-left: 11px;
}

/* Work area */
.work {
  display: flex;
  flex: 1;
  margin: 0 3px 0 3px;
  padding: 5px 0 4px 1px;
  background: #3b4453;
}
.canvas {
  position: relative;
  flex: 1;
  min-width: 0;
  background: #d8d8d8;
}
.map {
  position: relative;
  z-index: 1;
  overflow: visible;
  pointer-events: none;
}
.win {
  position: absolute;
  top: 9px;
  right: 9px;
  display: flex;
  gap: 7px;
}
.cmd {
  position: absolute;
  right: 32px;
  bottom: 0;
  left: 32px;
  display: flex;
  height: 28px;
  padding: 1px;
  border-radius: 3px 3px 0 0;
  background: #636973;
}
.cmd-tools {
  display: flex;
  align-items: center;
  gap: 8px;
  width: 57px;
  padding-left: 3px;
}
.cmd-tools .ico + .ico {
  margin-left: 4px;
}
.cmd-field {
  display: flex;
  flex: 1;
  align-items: center;
  gap: 3px;
  padding: 0 3px 0 4px;
  background: #f3f3f3;
}
.cmd-field input {
  flex: 1;
  min-width: 0;
  height: 24px;
  padding: 0 0 0 2px;
  border: 0;
  outline: 0;
  background: none;
  color: #555;
  font: italic 12px 'DejaVu Sans Mono', monospace;
}
.cmd-field input::placeholder {
  color: #8f8f8f;
  opacity: 1;
}

/* Vertical tabs */
.side-tabs {
  display: flex;
  flex-direction: column;
  width: 29px;
  padding: 24px 0 0 8px;
}
.side-tab {
  display: flex;
  align-items: center;
  justify-content: center;
  height: 78px;
  border: 1px solid #272e39;
  border-radius: 4px 0 0 4px;
  background: #303745;
  color: #b0b5bc;
  font-size: 11px;
}
.side-tab.on {
  border-right-color: #3b4453;
  background: #3b4453;
  color: #f0f1f2;
}
.side-tab span {
  writing-mode: vertical-rl;
  transform: rotate(180deg);
}

/* Task panel */
.panel {
  width: 266px;
  margin-top: 2px;
  font-size: 11px;
}
.panel h2 {
  display: flex;
  align-items: center;
  gap: 5px;
  height: 20px;
  margin: 0;
  padding: 0 0 4px 6px;
  border-radius: 3px 3px 0 0;
  background: #2c323e;
  color: #eceef0;
  font-size: 12px;
  font-weight: 400;
}
.panel-body {
  padding: 7px 12px 0 11px;
}
.row-map {
  display: flex;
  align-items: center;
  justify-content: space-between;
  padding: 0 1px 0 2px;
}
.row-map label {
  padding-bottom: 2px;
}
.dm {
  width: 122px;
}
.dm select {
  height: 18px;
  font-family: 'Liberation Sans', sans-serif;
  font-size: 12px;
}
.tools {
  display: flex;
  justify-content: space-between;
  height: 55px;
  margin-top: 9px;
  padding: 8px 27px 0 6px;
  border: 1px solid #2c333f;
}
.tools button {
  display: flex;
  flex-direction: column;
  align-items: center;
  gap: 0;
}
.tools button:disabled {
  color: #6f7682;
}
.views {
  display: flex;
  align-items: center;
  height: 28px;
  margin: 10px 0 7px;
}
.views button {
  display: flex;
  align-items: center;
  gap: 5px;
  height: 28px;
}
.views .on {
  width: 64px;
  padding-left: 1px;
  background: #222933;
}
.views i {
  width: 1px;
  height: 24px;
  margin: 0 9px 0 7px;
  background: #6c7480;
}
.tree-frame {
  padding: 4px;
  border: 1px solid #7b7c7e;
}
.tree {
  display: grid;
  grid-template: 158px 16px / 1fr 17px;
  background: #f0f0f0;
  color: #333;
}
.tree-rows {
  overflow: hidden;
  background: #f4f4f4;
}
.node {
  position: relative;
  display: flex;
  align-items: center;
  height: 29px;
  padding: 0 0 2px 33px;
  white-space: nowrap;
}
.deep {
  padding-left: 55px;
}
.sel {
  background: #0078d7;
  color: #fff;
  font-weight: 700;
}
.it {
  font-style: italic;
}
.chev {
  position: absolute;
  top: 8px;
  left: 11px;
}
.node input {
  flex: none;
  display: grid;
  place-items: center;
  width: 14px;
  height: 14px;
  margin: 0;
  border: 1px solid #707070;
  border-radius: 2px;
  background: #fff;
  appearance: none;
}
.node input:checked::before {
  content: '';
  width: 9px;
  height: 5px;
  margin-top: -3px;
  border: solid #666;
  border-width: 0 0 2px 2px;
  transform: rotate(-45deg);
}
.folder {
  margin: 0 11px 0 5px;
}
.swatch {
  flex: none;
  width: 53px;
  height: 16px;
  margin: 0 14px;
  border: 1px solid #000;
}
.cyan {
  background: #84cce6;
}
.violet {
  background: #7079bd;
}
.thumb {
  flex: none;
  width: 60px;
  height: 20px;
  margin: 0 11px 0 5px;
  background: #fff;
}
.thumb.line {
  background: linear-gradient(#d8d8d8, #d8d8d8) center / 54px 1px no-repeat #fff;
}
.vbar {
  display: flex;
  flex-direction: column;
  align-items: center;
  padding: 6px 0;
}
.vbar i {
  width: 15px;
  height: 88px;
  margin: auto 0 6px;
  background: #cdcdcd;
}
.hbar {
  display: flex;
  align-items: center;
  padding: 0 5px;
}
.hbar i {
  width: 177px;
  height: 15px;
  margin: 0 12px 0 6px;
  background: #cdcdcd;
}

/* Layout tabs */
.layout-tabs {
  height: 24px;
}
.model {
  width: 77px;
  height: 24px;
  margin: 0 6px 0 9px;
  padding-bottom: 2px;
  background: #3b4453;
  clip-path: polygon(9px 0, 100% 0, calc(100% - 9px) 100%, 0 100%);
  font-weight: 700;
}
.layout-tabs .plain {
  width: 76px;
  padding-bottom: 2px;
  text-align: left;
  font-size: 11px;
}
.layout-tabs .slash {
  margin: 0 10px 0 4px;
}
.layout-tabs .plus {
  margin: 0 7px 0 2px;
}

/* Status bar */
.status {
  display: flex;
  justify-content: space-between;
  height: 24px;
  margin: 5px 5px 6px 5px;
  color: #e8eaec;
  font-size: 11px;
}
.chip {
  display: flex;
  align-items: center;
  height: 24px;
  background: #3b4453;
}
.blank {
  width: 35px;
}
.cell {
  display: flex;
  align-items: center;
  justify-content: center;
  width: 24px;
  height: 22px;
}
.cell.burger {
  gap: 4px;
  padding: 0 4px;
  align-items: stretch;
}
.arrow {
  width: 15px;
}
.hot {
  width: 22px;
  margin: 0 1px;
  background: #5b8abf;
}
.mid {
  width: 22px;
  margin: 0 1px;
  background: #4d6a92;
}
.pad {
  gap: 5px;
  padding: 0 5px 0 4px;
}
.scale {
  gap: 5px;
  width: 94px;
}
.word {
  padding: 0 3px;
  font-size: 12px;
}
.pair {
  gap: 4px;
  padding: 0 3px;
}
</style>
